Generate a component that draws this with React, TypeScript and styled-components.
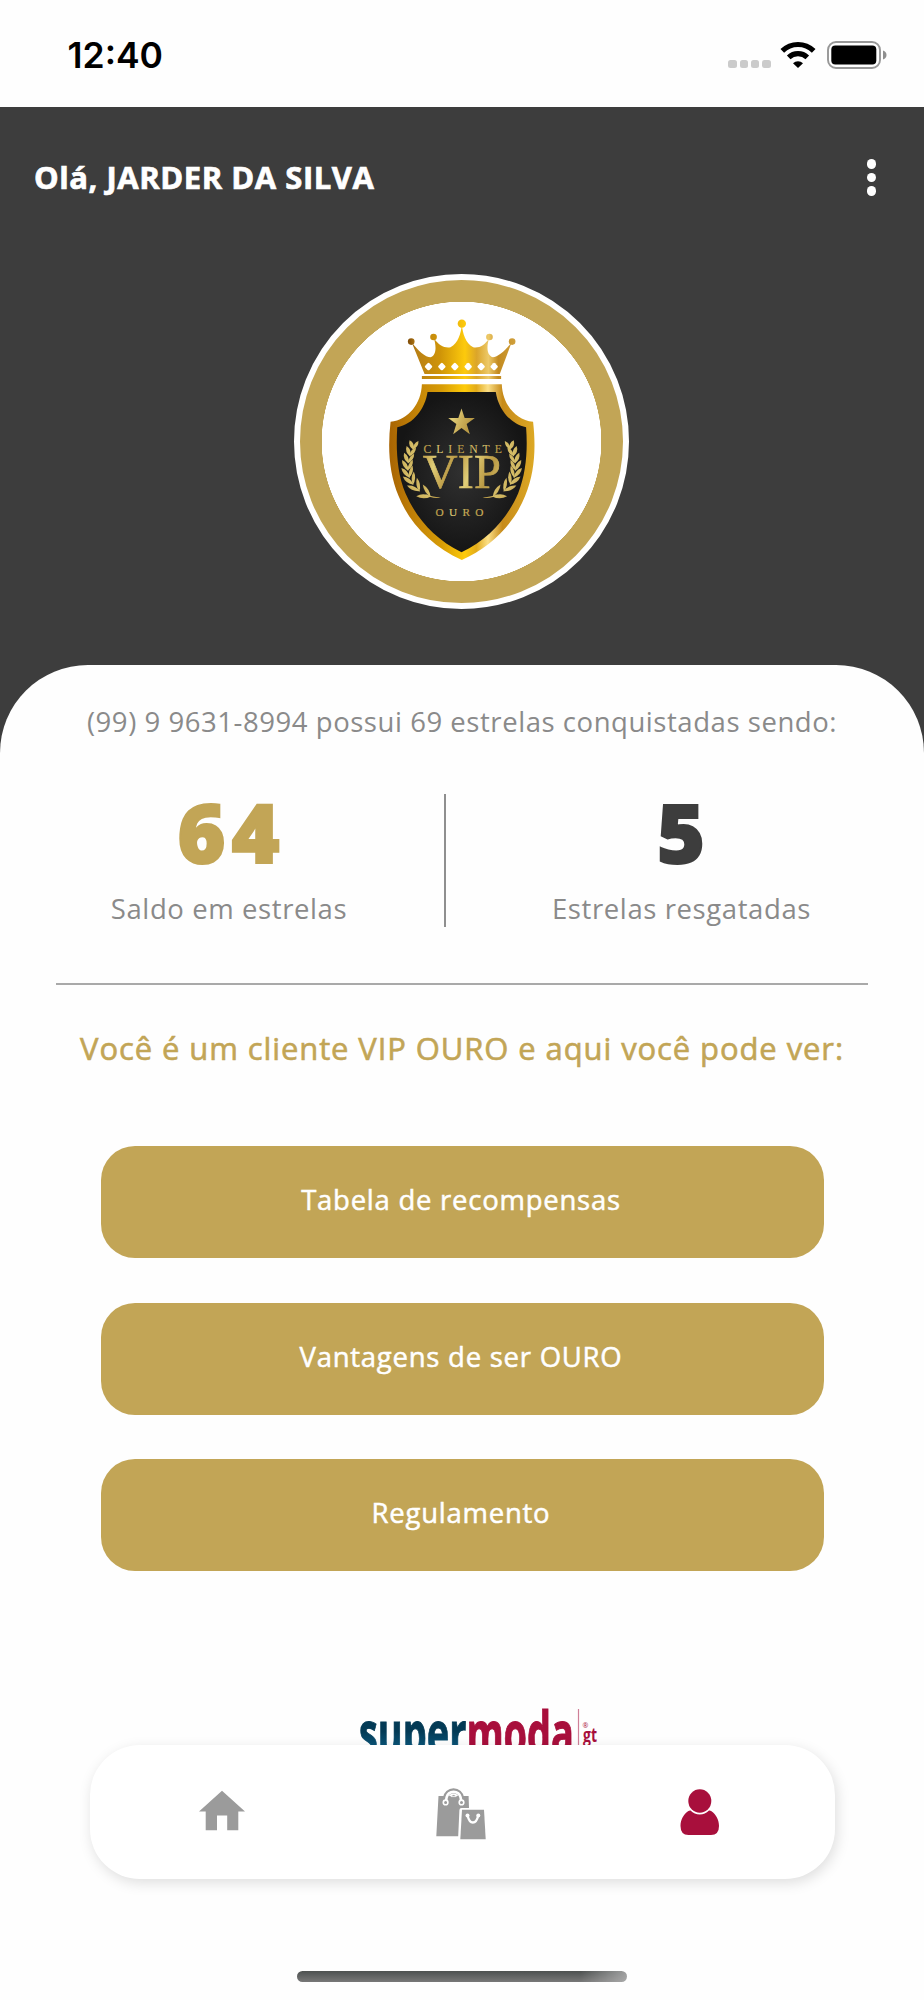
import React, { useState } from "react";
import styled, { createGlobalStyle } from "styled-components";

const GOLD = "#c2a556";
const DARK = "#3d3d3d";
const WINE = "#a80f3c";

// x, y, direction and length of each pair of leaves on the left branch
const LEAVES = [
  [401, 568, 4, 28],
  [391, 588, 8, 30],
  [386, 609, 4, 32],
  [385, 631, -4, 34],
  [389, 653, -14, 36],
  [400, 674, -26, 38],
  [419, 694, -40, 40],
  [452, 711, -62, 42],
];

const DIAMONDS = [447, 487, 526, 566, 605, 644];

const Laurel = () => (
  <g fill="url(#foil)">
    {LEAVES.map(([x, y, dir, len]) => (
      <g key={y} transform={`translate(${x} ${y})`}>
        <path
          transform={`rotate(${dir - 27})`}
          d={`M0 3Q12 ${-len / 2} 0 ${-len}Q-12 ${-len / 2} 0 3z`}
        />
        <path
          transform={`rotate(${dir + 30})`}
          d={`M0 3Q11 ${-len / 2} 0 ${-len}Q-10 ${-len / 2} 0 3z`}
        />
      </g>
    ))}
    <path d="M436 704Q455 713 484 714Q460 721 436 704z" />
  </g>
);

const VipShield = () => (
  <svg viewBox="127 127 838 838" width="279" height="279">
    <defs>
      <linearGradient id="gold" gradientUnits="userSpaceOnUse" x1="331" x2="764" y1="0" y2="0">
        <stop offset="0" stopColor="#a86403" />
        <stop offset="0.2" stopColor="#c58608" />
        <stop offset="0.36" stopColor="#d79c06" />
        <stop offset="0.52" stopColor="#fecb0a" />
        <stop offset="0.6" stopColor="#e2ab1b" />
        <stop offset="0.68" stopColor="#fbdf86" />
        <stop offset="0.78" stopColor="#c78b1a" />
        <stop offset="1" stopColor="#dca824" />
      </linearGradient>
      <linearGradient id="crown" gradientUnits="userSpaceOnUse" x1="385" x2="708" y1="0" y2="0">
        <stop offset="0" stopColor="#7d4a06" />
        <stop offset="0.08" stopColor="#b98015" />
        <stop offset="0.3" stopColor="#cf9408" />
        <stop offset="0.53" stopColor="#fdca0c" />
        <stop offset="0.64" stopColor="#dba52a" />
        <stop offset="0.75" stopColor="#edc968" />
        <stop offset="0.84" stopColor="#c38a1f" />
        <stop offset="1" stopColor="#d0a03c" />
      </linearGradient>
      <linearGradient id="foil" gradientUnits="userSpaceOnUse" x1="370" y1="560" x2="420" y2="580" spreadMethod="reflect">
        <stop offset="0" stopColor="#e0ce78" />
        <stop offset="0.5" stopColor="#ccb05a" />
        <stop offset="1" stopColor="#b99944" />
      </linearGradient>
      <radialGradient id="leather">
        <stop offset="0" stopColor="#303030" />
        <stop offset="1" stopColor="#151515" />
      </radialGradient>
    </defs>

    <g fill="url(#crown)">
      <circle cx="395" cy="246" r="10" />
      <circle cx="462" cy="232" r="10" />
      <circle cx="547" cy="192" r="12.5" />
      <circle cx="630" cy="232" r="10" />
      <circle cx="698" cy="246" r="10" />
      <path d="M435 343L396 247C415 273 438 293 453 293C472 286 470 258 463 236C478 258 495 266 513 263C536 250 544 222 547 195C550 222 558 250 581 263C600 266 615 258 629 236C622 258 620 286 640 293C655 293 678 273 697 247L661 343z" />
      <path d="M427 349h238v9h-238z" />
    </g>
    {DIAMONDS.map((x) => (
      <rect key={x} x={x - 9} y="312" width="18" height="18" rx="4" fill="#fff" transform={`rotate(45 ${x} 321)`} />
    ))}

    <path
      fill="url(#gold)"
      d="M427 374H667C669 432 706 480 761 487C770 565 766 640 737 710C704 793 635 862 547 902C459 862 390 793 357 710C328 640 324 565 333 487C388 480 425 432 427 374z"
    />
    <path
      fill="url(#leather)"
      d="M444 397H649C656 447 692 494 740 503C745 570 741 640 716 702C684 776 628 838 546 879C464 838 410 776 378 702C352 640 349 570 353 503C401 494 437 447 444 397z"
    />
    <path
      fill="url(#foil)"
      d="M546 447L555.5 475.5H586L561.5 493.5L571 524L546 505.5L521 524L530.5 493.5L506 475.5H536.5z"
    />
    <g fill="url(#foil)" stroke="url(#foil)" fontFamily="'Liberation Serif', serif">
      <text x="432" y="580" fontSize="35" strokeWidth="0.3" textLength="235">CLIENTE</text>
      <text x="430" y="687" fontSize="145" strokeWidth="2" textLength="234">VIP</text>
      <text x="468" y="771" fontSize="34" strokeWidth="0.5" textLength="144">OURO</text>
    </g>
    <Laurel />
    <g transform="translate(1093 0) scale(-1 1)">
      <Laurel />
    </g>
  </svg>
);

const WifiIcon = () => (
  <svg width="36" height="28" viewBox="0 0 36 28" fill="none" stroke="#000" strokeWidth="5.2">
    <path d="M2.3 9.9A22.5 22.5 0 0 1 33.7 9.9" />
    <path d="M8.7 16.3A13.5 13.5 0 0 1 27.3 16.3" />
    <path d="M18 27L13 22.2A7.5 7.5 0 0 1 23 22.2z" fill="#000" stroke="none" />
  </svg>
);

const BatteryIcon = () => (
  <svg width="60" height="28" viewBox="0 0 60 28">
    <rect x="1" y="1" width="52" height="26" rx="8" fill="none" stroke="#979797" strokeWidth="1.9" />
    <rect x="4.3" y="4.5" width="45" height="19" rx="4" />
    <path d="M56 9.5q3.5 1.3 3.5 4.5t-3.5 4.5z" fill="#8f8f8f" />
  </svg>
);

const HomeIcon = () => (
  <svg width="46" height="54" viewBox="199 1787 46 54" fill="#9b9b9b">
    <path d="M222 1790.7L245 1811.4H238.3V1830.2H227.2V1815.6H217V1830.2H205.7V1811.4H199z" />
  </svg>
);

const BagsIcon = () => (
  <svg width="53" height="54" viewBox="436 1787 53 54" fill="none">
    <path d="M438.5 1796H468.6L469 1808H461.5Q459.5 1808 459.4 1810L458.2 1836.2H436.3z" fill="#9b9b9b" />
    <path d="M445.6 1801V1798A8 8 0 0 1 461.5 1798V1801" stroke="#9b9b9b" strokeWidth="5.4" />
    <path d="M445.8 1802.3L446.6 1797.4A7.2 7.2 0 0 1 460.6 1797.4L461.4 1802.3" stroke="#fff" strokeWidth="2.6" />
    <path d="M451 1796.6A2.7 2.7 0 0 1 456.2 1796.6z" fill="#9b9b9b" stroke="#fff" strokeWidth="0.8" />
    <circle cx="445.6" cy="1802.4" r="2.3" fill="#9b9b9b" stroke="#fff" strokeWidth="1.6" />
    <circle cx="461.5" cy="1802.4" r="2.3" fill="#9b9b9b" stroke="#fff" strokeWidth="1.6" />
    <path d="M462 1809.8H484L485.7 1839.2H460.3z" fill="#9b9b9b" />
    <path d="M467.6 1815.5C468.5 1819.8 470.3 1822.5 472.9 1822.5S477.3 1819.8 478.2 1815.5" stroke="#fff" strokeWidth="2.3" />
    <circle cx="467.5" cy="1815.5" r="2" fill="#fff" />
    <circle cx="478.3" cy="1815.5" r="2" fill="#fff" />
  </svg>
);

const PersonIcon = () => (
  <svg width="40" height="54" viewBox="680 1787 40 54" fill={WINE}>
    <ellipse cx="699.8" cy="1801" rx="11.5" ry="11.8" />
    <path d="M690.5 1810.6Q694.5 1814.6 699.8 1814.6T709 1810.6Q710.2 1810.4 711.5 1811.3C716 1814.5 719 1820 719 1826Q719 1835 711 1835H688.5Q680.5 1835 680.5 1826C680.5 1820 683.5 1814.5 688 1811.3Q689.3 1810.4 690.5 1810.6z" />
  </svg>
);

const Logo = () => (
  <svg width="240" height="80" viewBox="358 1705 240 80" fontFamily="'Open Sans', sans-serif" fontWeight="700">
    <defs>
      <linearGradient id="sea" gradientUnits="userSpaceOnUse" x1="0" y1="1722" x2="0" y2="1757">
        <stop offset="0.3" stopColor="#033a55" />
        <stop offset="1" stopColor="#0f6690" />
      </linearGradient>
    </defs>
    <text x="358" y="1756" fontSize="61" textLength="215" lengthAdjust="spacingAndGlyphs" strokeWidth="1">
      <tspan fill="url(#sea)" stroke="url(#sea)">super</tspan>
      <tspan fill={WINE} stroke={WINE}>moda</tspan>
    </text>
    <path d="M577.5 1710v50" stroke="#cf7f97" strokeWidth="1.2" />
    <text x="582" y="1743" fontSize="20" textLength="14" lengthAdjust="spacingAndGlyphs" fill={WINE}>
      gt
    </text>
    <text x="581.5" y="1728.5" fontSize="7" fontWeight="400" fill={WINE}>®</text>
  </svg>
);

const App = () => {
  const [tab, setTab] = useState("perfil");

  return (
    <>
      <GlobalStyle />
      <Screen>
        <StatusBar>
          <Clock>12:40</Clock>
          <StatusIcons>
            <Signal>
              <i />
              <i />
              <i />
              <i />
            </Signal>
            <WifiIcon />
            <BatteryIcon />
          </StatusIcons>
        </StatusBar>

        <Hero>
          <TopBar>
            <Greeting>Olá, JARDER DA SILVA</Greeting>
            <MenuButton title="Menu">
              <i />
              <i />
              <i />
            </MenuButton>
          </TopBar>
          <Medal>
            <VipShield />
          </Medal>
        </Hero>

        <Sheet>
          <Summary>(99) 9 9631-8994 possui 69 estrelas conquistadas sendo:</Summary>
          <Stats>
            <Stat>
              <StatValue $color={GOLD}>64</StatValue>
              <StatLabel>Saldo em estrelas</StatLabel>
            </Stat>
            <Divider />
            <Stat>
              <StatValue $color={DARK}>5</StatValue>
              <StatLabel>Estrelas resgatadas</StatLabel>
            </Stat>
          </Stats>
          <Rule />
          <Heading>Você é um cliente VIP OURO e aqui você pode ver:</Heading>
          <Actions>
            <ActionButton>Tabela de recompensas</ActionButton>
            <ActionButton>Vantagens de ser OURO</ActionButton>
            <ActionButton>Regulamento</ActionButton>
          </Actions>
          <Brand>
            <Logo />
          </Brand>
        </Sheet>

        <TabBar>
          <Tab title="Início" onClick={() => setTab("inicio")} aria-selected={tab === "inicio"}>
            <HomeIcon />
          </Tab>
          <Tab title="Loja" onClick={() => setTab("loja")} aria-selected={tab === "loja"}>
            <BagsIcon />
          </Tab>
          <Tab title="Perfil" onClick={() => setTab("perfil")} aria-selected={tab === "perfil"}>
            <PersonIcon />
          </Tab>
        </TabBar>
        <HomeIndicator />
      </Screen>
    </>
  );
};

export default App;

const GlobalStyle = createGlobalStyle`
  * {
    box-sizing: border-box;
  }
  body {
    margin: 0;
    background: #fff;
    font-family: "Open Sans", "Noto Sans", sans-serif;
  }
  button {
    border: none;
    padding: 0;
    background: none;
    font-family: inherit;
    cursor: pointer;
  }
  svg {
    display: block;
  }
`;

const Screen = styled.div`
  position: relative;
  width: 924px;
  height: 2000px;
  overflow: hidden;
  background: #fefefe;
`;

const StatusBar = styled.div`
  height: 107px;
  padding: 0 37.5px 0 67.5px;
  display: flex;
  align-items: center;
  justify-content: space-between;
`;

const Clock = styled.span`
  font-family: Inter, sans-serif;
  font-size: 35.5px;
  line-height: 40px;
  font-weight: 600;
  color: #000;
  margin-top: 4px;
`;

const StatusIcons = styled.div`
  display: flex;
  align-items: center;
  gap: 10.5px;
  margin-top: 3px;
`;

const Signal = styled.div`
  display: flex;
  gap: 3px;
  margin: 18px -1px 0 0;

  i {
    width: 8.3px;
    height: 8.3px;
    border-radius: 2.5px;
    background: #cbcbcb;
  }
`;

const Hero = styled.header`
  height: 660px;
  background: ${DARK};
`;

const TopBar = styled.div`
  display: flex;
  align-items: center;
  justify-content: space-between;
  height: 140px;
  padding: 0 42.5px 0 34px;
`;

const Greeting = styled.h1`
  margin: 0;
  font-size: 31px;
  line-height: 40px;
  font-weight: 700;
  letter-spacing: 0.55px;
  color: #fff;
  -webkit-text-stroke: 0.7px #fff;
`;

const MenuButton = styled.button`
  display: flex;
  flex-direction: column;
  align-items: center;
  gap: 4px;
  width: 20px;
  margin-top: 1px;

  i {
    width: 9.4px;
    height: 9.4px;
    border-radius: 50%;
    background: #fff;
  }
`;

const Medal = styled.div`
  width: 335px;
  height: 335px;
  margin: 27.4px auto 0 294.4px;
  padding: 22px;
  border: 6px solid #fff;
  border-radius: 50%;
  background: radial-gradient(closest-side, #fff 139.5px, ${GOLD} 140px);
`;

const Sheet = styled.main`
  position: relative;
  margin-top: -102px;
  height: 1335px;
  padding-top: 37px;
  border-radius: 88px 88px 0 0;
  background: #fefefe;
`;

const Summary = styled.p`
  margin: 0;
  text-align: center;
  font-size: 27.5px;
  line-height: 40px;
  letter-spacing: 0.55px;
  color: #8a8a8a;
  white-space: nowrap;
`;

const Stats = styled.section`
  display: flex;
  height: 133px;
  margin-top: 52px;
  padding: 0 8px 0 13px;
`;

const Stat = styled.div`
  display: flex;
  flex: 1;
  flex-direction: column;
  align-items: center;

  &:first-child {
    flex: 0 0 431px;
  }
`;

const StatValue = styled.strong<{ $color: string }>`
  margin-top: -3px;
  font-size: 82px;
  line-height: 80px;
  font-weight: 800;
  letter-spacing: 6px;
  text-indent: 6px;
  color: ${({ $color }) => $color};
  -webkit-text-stroke: 2px ${({ $color }) => $color};
`;

const StatLabel = styled.span`
  margin-top: 18px;
  font-size: 27.5px;
  line-height: 40px;
  letter-spacing: 0.6px;
  text-indent: 1px;
  color: #8a8a8a;
`;

const Divider = styled.div`
  width: 2px;
  background: #8f8f8f;
`;

const Rule = styled.hr`
  height: 2px;
  margin: 56px 56px 0;
  border: 0;
  background: #a9a9a9;
`;

const Heading = styled.h2`
  margin: 43px 0 0;
  text-align: center;
  font-size: 31px;
  line-height: 40px;
  font-weight: 500;
  letter-spacing: 0.9px;
  color: ${GOLD};
  -webkit-text-stroke: 0.6px ${GOLD};
  white-space: nowrap;
`;

const Actions = styled.div`
  display: flex;
  flex-direction: column;
  gap: 44.5px;
  margin-top: 78px;
  padding: 0 100.5px;
`;

const ActionButton = styled.button`
  height: 112px;
  padding: 0 2px 5px 0;
  border-radius: 34px;
  font-size: 27.5px;
  font-weight: 500;
  letter-spacing: 0.75px;
  color: #fff;
  background: ${GOLD};
  -webkit-text-stroke: 0.5px #fff;
`;

const Brand = styled.div`
  display: flex;
  justify-content: center;
  margin-top: 133px;
  padding-left: 33px;
`;

const TabBar = styled.nav`
  position: absolute;
  left: 89.5px;
  top: 1745px;
  display: flex;
  align-items: center;
  justify-content: space-between;
  width: 745px;
  height: 134px;
  padding: 4px 114.5px 0 109.5px;
  border-radius: 50px;
  background: #fff;
  box-shadow: 2px 4px 14px rgba(0, 0, 0, 0.13);
`;

const Tab = styled.button`
  display: flex;
`;

const HomeIndicator = styled.div`
  position: absolute;
  left: 297px;
  bottom: 18px;
  width: 330px;
  height: 11.5px;
  border-radius: 6px;
  background: linear-gradient(to right, transparent 86%, rgba(190, 190, 190, 0.7)),
    linear-gradient(#4d5150, #787878);
`;
